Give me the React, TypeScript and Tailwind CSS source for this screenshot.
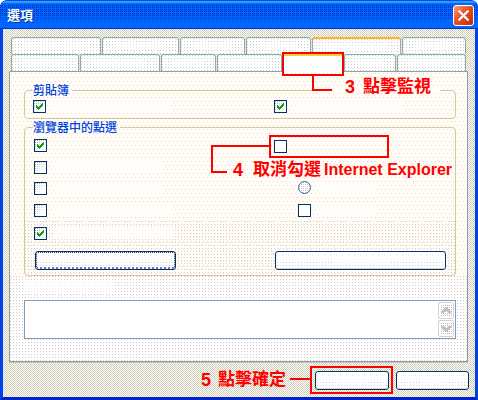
import React from 'react';

const cjk = "font-['Liberation_Sans','Noto_Sans_CJK_TC',sans-serif]";

const tabDots =
  'bg-white bg-[conic-gradient(at_1px_1px,transparent_75%,#cccccc_0),conic-gradient(at_1px_1px,transparent_75%,#ffdddd_0)] bg-[size:3px_3px,6px_6px] bg-[position:0_0,1px_1px]';
const lightDots =
  'bg-[#fffefa] bg-[conic-gradient(at_1px_1px,transparent_75%,#ffcccc_0),conic-gradient(at_1px_1px,transparent_75%,#ffcccc_0),conic-gradient(at_1px_1px,transparent_75%,#ffffcc_0)] bg-[size:4px_8px,4px_8px,4px_4px] bg-[position:1px_1px,3px_5px,3px_3px]';
const buttonFill =
  'bg-white bg-[conic-gradient(at_1px_1px,transparent_75%,#ffccff_0),linear-gradient(#ffffff_0_7px,transparent_9px),conic-gradient(at_1px_1px,transparent_75%,#cccccc_0)] bg-[size:6px_18px,100%_100%,3px_3px] bg-[position:0_3px,0_0,1px_1px]';

function Tab({ w, hot = false, open = false }: { w: string; hot?: boolean; open?: boolean }) {
  if (open) {
    return <div className={`${w} h-[18px] shrink-0 border-t-2 border-[#ffcc33] bg-white`} />;
  }
  return (
    <div
      className={`${w} h-[17px] shrink-0 rounded-t-[3px] border border-b-0 ${
        hot ? 'border-t-2 border-x-[#99aabb] border-t-[#ffb329]' : 'border-x-[#94a9a9] border-t-[#7fb0ae]'
      } ${tabDots} px-3 pt-[5px]`}
    >
      <div className="h-[6px] w-full bg-white/55" />
    </div>
  );
}

function Check({ on = false, plain = false }: { on?: boolean; plain?: boolean }) {
  return (
    <div
      className={`h-[13px] w-[13px] shrink-0 border border-[#003366] ${
        plain
          ? 'bg-white'
          : 'bg-white bg-[linear-gradient(135deg,transparent_15%,#ffffff_70%),conic-gradient(at_1px_1px,transparent_75%,#aaaaaa_0)] bg-[size:100%_100%,2px_2px]'
      }`}
    >
      {on && (
        <svg width="11" height="11" viewBox="0 0 11 11" shapeRendering="crispEdges">
          <path d="M2 4h1v1h1v1h1v-1h1v-1h1v-1h1v-1h1v3h-1v1h-1v1h-1v1h-1v1h-1v-1h-1v-1h-1z" fill="#129b19" />
        </svg>
      )}
    </div>
  );
}

function Button({ w, focus = false }: { w: string; focus?: boolean }) {
  return (
    <div className={`${w} h-[19px] shrink-0 rounded-[3px] border border-[#003366] ${buttonFill}`}>
      <div
        className={`flex h-full w-full items-center justify-center rounded-[2px] ${
          focus ? 'border border-b-2 border-dotted border-[#333366] border-b-[#6677cc]' : 'border-b border-[#d5cfc4]'
        }`}
      >
        <div className="h-[6px] w-1/3 bg-white/60" />
      </div>
    </div>
  );
}

function ScrollArrow({ down = false }: { down?: boolean }) {
  return (
    <div className="flex h-[17px] w-[16px] items-center justify-center rounded-[2px] border border-[#d2d2d2] bg-white bg-[conic-gradient(at_1px_1px,transparent_75%,#bbbbbb_0)] bg-[size:2px_2px] outline-1 -outline-offset-2 outline-white">
      <svg width="10" height="7" viewBox="0 0 10 7" shapeRendering="crispEdges">
        <path
          d={down ? 'M0 1h3v1h1v1h2v-1h1v-1h3v2h-1v1h-1v1h-1v1h-1v1h-2v-1h-1v-1h-1v-1h-1v-1h-1z' : 'M4 0h2v1h1v1h1v1h1v1h1v2h-3v-1h-1v-1h-2v1h-1v1h-3v-2h1v-1h1v-1h1v-1h1z'}
          fill="#c0c0c0"
        />
        <path d={down ? 'M8 1h1v1h-1z' : 'M8 4h1v1h-1z'} fill="#ffaaaa" />
      </svg>
    </div>
  );
}

function Callout({ n, children, pos, gap }: { n: string; children: React.ReactNode; pos: string; gap: string }) {
  return (
    <div className={`absolute ${pos} ${gap} flex h-[20px] items-center text-[17px] leading-[20px] font-bold whitespace-nowrap text-[#ff0000]`}>
      <span className="text-[18px]">{n}</span>
      {children}
    </div>
  );
}

export default function App() {
  return (
    <div className={`relative flex h-[400px] w-[478px] flex-col overflow-hidden bg-white ${cjk}`}>
      <header className="flex h-[29px] shrink-0 items-center justify-between rounded-t-[7px] border-t border-b border-t-[#0055dd] border-b-[#0033cc] bg-[#0066ff] bg-[linear-gradient(#3399ff_0_2px,transparent_2px),linear-gradient(#0066ff_0_3px,#0066ff00_3px_14px,#0066ff_22px),conic-gradient(at_1px_1px,transparent_75%,#0033bb_0),conic-gradient(at_1px_1px,transparent_75%,#0033bb_0)] bg-[size:100%_100%,100%_100%,2px_2px,4px_4px] bg-[position:0_0,0_0,0_0,1px_1px] pr-[4px] pl-[7px]">
        <span className="pt-[3px] text-[13px] leading-[16px] font-bold text-white [text-shadow:1px_1px_0_#003399]">選項</span>
        <div className="mt-[2px] flex h-[21px] w-[21px] items-center justify-center rounded-[3px] border border-white bg-[#dd4a22] bg-[linear-gradient(135deg,#ff9977_0%,transparent_45%,#bb2a09_100%),conic-gradient(at_1px_1px,transparent_75%,#ff6633_0)] bg-[size:100%_100%,2px_2px]">
          <svg width="13" height="13" viewBox="0 0 13 13">
            <path d="M1.5 1.5l10 10M11.5 1.5l-10 10" stroke="white" strokeWidth="2.2" />
          </svg>
        </div>
      </header>

      <main className="flex min-h-0 flex-1 flex-col border-x-[3px] border-b-[3px] border-[#0044e8] border-b-[#0022cc] bg-white bg-[conic-gradient(at_1px_1px,transparent_75%,#cccccc_0),conic-gradient(at_1px_1px,transparent_75%,#d2ccb4_0),conic-gradient(at_1px_1px,transparent_75%,#ffffcc_0)] bg-[size:2px_2px,2px_2px,4px_2px] bg-[position:0_0,1px_1px,3px_0] px-[6px] pt-[8px]">
        <div className="flex h-[17px] shrink-0 gap-[1px] pl-[2px]">
          <Tab w="w-[90px]" />
          <Tab w="w-[77px]" />
          <Tab w="w-[65px]" />
          <Tab w="w-[65px]" />
          <Tab w="w-[89px]" hot />
          <Tab w="w-[64px]" />
        </div>
        <div className="z-10 flex h-[17px] shrink-0 gap-[1px] pl-[2px]">
          <Tab w="w-[68px]" />
          <Tab w="w-[80px]" />
          <Tab w="w-[55px]" />
          <Tab w="w-[65px]" />
          <Tab w="w-[60px]" open />
          <Tab w="w-[52px]" />
          <Tab w="w-[69px]" />
        </div>

        <section className={`flex h-[291px] w-[459px] shrink-0 flex-col border border-[#8f9c9c] border-t-[#88a6a6] ${lightDots}`}>
          <div className="flex h-full flex-col pt-[12px] pr-[11px] pl-[14px]">
            <fieldset className="h-[35px] shrink-0 rounded-[4px] border border-[#cccc9f] px-[8px]">
              <legend className="h-[12px] pr-[3px] text-[12px] leading-[14px] font-medium text-[#0044dd]">剪貼簿</legend>
              <div className="flex gap-[5px] pt-[4px]">
                <Check on />
                <div className="h-[13px] w-[120px] bg-white/50" />
                <div className="w-[93px]" />
                <Check on />
                <div className="h-[13px] w-[110px] bg-white/50" />
              </div>
            </fieldset>

            <fieldset className="mt-[2px] h-[155px] shrink-0 rounded-[4px] border border-[#cccc9f] px-[8px]">
              <legend className="h-[12px] pr-[3px] text-[12px] leading-[14px] font-medium text-[#0044dd]">瀏覽器中的點選</legend>
              <div className="flex h-[22px] gap-[227px] pt-[6px] pl-[1px]">
                <Check on />
                <div className="pt-[1px]"><Check plain /></div>
              </div>
              <div className="flex h-[21px] gap-[6px] pt-[6px] pl-[1px]">
                <Check />
                <div className="h-[12px] w-[110px] bg-white/50" />
              </div>
              <div className="flex h-[22px] gap-[6px] pt-[6px] pl-[1px]">
                <Check />
                <div className="h-[12px] w-[110px] bg-white/50" />
                <div className="w-[123px]" />
                <div className="-mt-[1px] h-[13px] w-[13px] rounded-full border border-[#336699] bg-white bg-[conic-gradient(at_1px_1px,transparent_75%,#cccccc_0)] bg-[size:2px_2px]" />
                <div className="h-[12px] w-[60px] bg-white/50" />
              </div>
              <div className="flex h-[23px] gap-[6px] pt-[6px] pl-[1px]">
                <Check />
                <div className="h-[12px] w-[120px] bg-white/50" />
                <div className="w-[113px]" />
                <Check plain />
                <div className="h-[12px] w-[60px] bg-white/50" />
              </div>
              <div className="-mx-[8px] h-[54px] bg-[conic-gradient(at_1px_1px,transparent_75%,#d8d0d0_0)] bg-[size:3px_3px] px-[8px]">
                <div className="flex h-[30px] gap-[6px] pt-[6px] pl-[1px]">
                  <Check on />
                  <div className="h-[12px] w-[120px] bg-white/70" />
                </div>
                <div className="flex gap-[99px] pl-[2px]">
                  <Button w="w-[141px]" focus />
                  <Button w="w-[171px]" />
                </div>
              </div>
            </fieldset>

            <div className="-mr-[11px] -ml-[14px] flex-1 bg-white bg-[conic-gradient(at_1px_1px,transparent_75%,#cccccc_0),conic-gradient(at_1px_1px,transparent_75%,#ffdddd_0)] bg-[size:3px_3px,6px_6px] bg-[position:0_0,1px_1px] pr-[11px] pl-[14px]">
              <div className="flex h-[24px] items-center"><div className="h-[12px] w-[90px] bg-white/60" /></div>
              <div className="flex h-[39px] justify-end border border-[#7f9db9] bg-white p-px">
                <div className="flex flex-col gap-[1px]">
                  <ScrollArrow />
                  <ScrollArrow down />
                </div>
              </div>
            </div>
          </div>
        </section>

        <footer className="flex h-[28px] shrink-0 justify-end gap-[7px] border-t border-[#ccc6bc] pt-[8px]">
          <Button w="w-[74px]" />
          <Button w="w-[73px]" />
        </footer>
      </main>

      <div className="absolute top-[52px] left-[282px] z-20 h-[24px] w-[62px] border-2 border-[#ff0000]" />
      <div className="absolute top-[76px] left-[312px] z-20 h-[15px] w-[20px] border-b-2 border-l-2 border-[#ff0000]" />
      <div className="absolute top-[88px] left-[333px] h-[4px] w-[107px] bg-[#fffefa]" />
      <Callout n="3" pos="top-[77px] left-[345px]" gap="gap-[8px]"><span>點擊監視</span></Callout>

      <div className="absolute top-[135px] left-[269px] h-[23px] w-[120px] border-2 border-[#ff0000]" />
      <div className="absolute top-[145px] left-[211px] h-[28px] w-[16px] border-b-2 border-l-2 border-[#ff0000]" />
      <div className="absolute top-[145px] left-[211px] h-[2px] w-[58px] bg-[#ff0000]" />
      <Callout n="4" pos="top-[160px] left-[233px]" gap="gap-[10px]">
        <span>取消勾選</span>
        <span className="-ml-[7px] text-[16px]">Internet Explorer</span>
      </Callout>

      <div className="absolute top-[366px] left-[310px] h-[28px] w-[83px] border-2 border-[#ff0000]" />
      <div className="absolute top-[378px] left-[290px] h-[2px] w-[20px] bg-[#ff0000]" />
      <Callout n="5" pos="top-[370px] left-[201px]" gap="gap-[7px]"><span>點擊確定</span></Callout>
    </div>
  );
}
